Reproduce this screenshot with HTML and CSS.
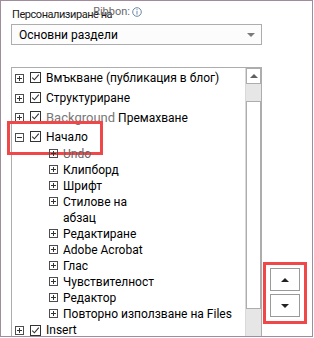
FILE: index.html
```html
<!DOCTYPE html>
<html>
<head>
    <link rel="stylesheet" href="styles.css">
</head>
<body>
    <div class="frame">
        <div class="title">
            <span class="caption">Персонализиране на</span>
            <span class="ribbon">Ribbon:</span>
            <svg class="info" width="10" height="10" viewBox="0 0 10 10">
                <circle cx="5" cy="5" r="4.3" fill="none" stroke="#6d87a8" stroke-width="1"/>
                <rect x="4.5" y="2.2" width="1" height="1" fill="#6d87a8"/>
                <rect x="4.5" y="4" width="1" height="3.6" fill="#6d87a8"/>
            </svg>
        </div>

        <div class="dropdown">
            <span>Основни раздели</span>
            <span class="caret"></span>
        </div>

        <div class="main">
            <div class="listbox">
                <div class="tree">
                    <div class="row top">
                        <span class="exp plus"></span>
                        <svg class="check" width="11" height="11" viewBox="0 0 11 11"><rect x="0.5" y="0.5" width="10" height="10" fill="#fff" stroke="#333"/><path d="M2.2 5.6 L4.4 7.8 L8.8 2.6" fill="none" stroke="#333" stroke-width="1.1"/></svg>
                        <span class="label">Вмъкване (публикация в блог)</span>
                    </div>
                    <div class="row top">
                        <span class="exp plus"></span>
                        <svg class="check" width="11" height="11" viewBox="0 0 11 11"><rect x="0.5" y="0.5" width="10" height="10" fill="#fff" stroke="#333"/><path d="M2.2 5.6 L4.4 7.8 L8.8 2.6" fill="none" stroke="#333" stroke-width="1.1"/></svg>
                        <span class="label">Структуриране</span>
                    </div>
                    <div class="row top">
                        <span class="exp plus"></span>
                        <svg class="check" width="11" height="11" viewBox="0 0 11 11"><rect x="0.5" y="0.5" width="10" height="10" fill="#fff" stroke="#333"/><path d="M2.2 5.6 L4.4 7.8 L8.8 2.6" fill="none" stroke="#333" stroke-width="1.1"/></svg>
                        <span class="label"><span class="muted big">Background</span> Премахване</span>
                    </div>
                    <div class="row top marked">
                        <span class="exp"></span>
                        <svg class="check" width="11" height="11" viewBox="0 0 11 11"><rect x="0.5" y="0.5" width="10" height="10" fill="#fff" stroke="#333"/><path d="M2.2 5.6 L4.4 7.8 L8.8 2.6" fill="none" stroke="#333" stroke-width="1.1"/></svg>
                        <span class="label">Начало</span>
                    </div>

                    <div class="row child"><span class="exp plus"></span><span class="label undo">Undo</span></div>
                    <div class="row child"><span class="exp plus"></span><span class="label">Клипборд</span></div>
                    <div class="row child"><span class="exp plus"></span><span class="label">Шрифт</span></div>
                    <div class="row child"><span class="exp plus"></span><span class="label">Стилове на<br>абзац</span></div>
                    <div class="row child"><span class="exp plus"></span><span class="label">Редактиране</span></div>
                    <div class="row child"><span class="exp plus"></span><span class="label">Adobe Acrobat</span></div>
                    <div class="row child"><span class="exp plus"></span><span class="label">Глас</span></div>
                    <div class="row child"><span class="exp plus"></span><span class="label">Чувствителност</span></div>
                    <div class="row child"><span class="exp plus"></span><span class="label">Редактор</span></div>
                    <div class="row child"><span class="exp plus"></span><span class="label">Повторно използване на Files</span></div>

                    <div class="row last">
                        <span class="exp plus"></span>
                        <svg class="check" width="11" height="11" viewBox="0 0 11 11"><rect x="0.5" y="0.5" width="10" height="10" fill="#fff" stroke="#333"/><path d="M2.2 5.6 L4.4 7.8 L8.8 2.6" fill="none" stroke="#333" stroke-width="1.1"/></svg>
                        <span class="label">Insert</span>
                    </div>
                </div>

                <div class="scrollbar">
                    <div class="sb-btn"><span class="arrow-up small"></span></div>
                    <div class="sb-track top-track"></div>
                    <div class="sb-thumb"></div>
                    <div class="sb-track"></div>
                </div>
            </div>

            <div class="side">
                <div class="move-box">
                    <div class="move-btn"><span class="arrow-up"></span></div>
                    <div class="move-btn"><span class="arrow-down"></span></div>
                </div>
            </div>
        </div>
    </div>
</body>
</html>
```

FILE: styles.css
```css
* {
    margin: 0;
    padding: 0;
    box-sizing: border-box;
}

body {
    background: white;
    font-family: Roboto, 'Liberation Sans', Arial, sans-serif;
    font-size: 12px;
    color: #000;
}

.frame {
    width: 313px;
    height: 337px;
    border: 1px solid #a08c9c;
    padding: 5px 0 0 10px;
    overflow: hidden;
}

.title {
    display: flex;
    align-items: flex-start;
    height: 18px;
    line-height: 18px;
    font-size: 11px;
    color: #1a1a1a;
}

.title .caption {
    letter-spacing: -0.45px;
    padding-left: 1px;
}

.title .ribbon {
    margin-left: -19px;
    margin-top: -3px;
    color: #6a6a6a;
}

.title .info {
    margin-left: 2px;
    margin-top: 1px;
}

.dropdown {
    display: flex;
    align-items: center;
    justify-content: space-between;
    width: 251px;
    height: 21px;
    border: 1px solid #adadad;
    background: #fcfcfc;
    padding: 0 6px 0 7px;
    margin-bottom: 22px;
}

.caret {
    width: 0;
    height: 0;
    border-left: 4px solid transparent;
    border-right: 4px solid transparent;
    border-top: 4px solid #7a7a7a;
}

.main {
    display: flex;
    align-items: flex-start;
}

.listbox {
    display: flex;
    width: 251px;
    height: 290px;
    border: 1px solid #adadad;
}

.tree {
    flex: 1;
    padding-left: 3px;
}

.row {
    display: flex;
    align-items: flex-start;
    position: relative;
}

.row.top {
    height: 19.5px;
    padding-top: 4px;
}

.row.child {
    padding-left: 34px;
    line-height: 16px;
}

.row.child .exp {
    margin-top: 3px;
}

.row .label {
    margin-left: 5px;
    line-height: 13px;
}

.row.child .label,
.row.last .label {
    line-height: 16px;
}

.row.last .exp {
    margin-top: 4px;
}

.row.last .check {
    margin-top: 3px;
}

.muted {
    color: #777;
}

.undo {
    color: #666;
}

.big {
    font-size: 13px;
}

.exp {
    width: 9px;
    height: 9px;
    border: 1px solid #4d4d4d;
    position: relative;
    flex-shrink: 0;
    margin-top: 2px;
    margin-right: 6px;
}

.exp::before {
    content: '';
    position: absolute;
    left: 1px;
    top: 3px;
    width: 5px;
    height: 1px;
    background: #333;
}

.exp.plus::after {
    content: '';
    position: absolute;
    left: 3px;
    top: 1px;
    width: 1px;
    height: 5px;
    background: #333;
}

.row.child .exp {
    margin-right: 0;
}

.check {
    flex-shrink: 0;
}

.marked::after {
    content: '';
    position: absolute;
    left: -8px;
    top: -6px;
    width: 90px;
    height: 28px;
    border: 3px solid #f04848;
}

.scrollbar {
    width: 16px;
    display: flex;
    flex-direction: column;
    border-left: 1px solid #d9d9d9;
}

.sb-btn {
    height: 16px;
    border: 1px solid #adadad;
    display: flex;
    align-items: center;
    justify-content: center;
    background: #fff;
}

.sb-track {
    flex: 1;
    background: #e6e6e6;
}

.sb-track.top-track {
    flex: none;
    height: 17px;
}

.sb-thumb {
    height: 208px;
    border: 1px solid #adadad;
    background: #fff;
}

.side {
    padding: 195px 0 0 1px;
}

.move-box {
    width: 44px;
    height: 62px;
    border: 3px solid #f04848;
    padding: 3px 0 0 4px;
    display: flex;
    flex-direction: column;
    gap: 3px;
}

.move-btn {
    width: 30px;
    height: 23px;
    border: 1px solid #9a9a9a;
    display: flex;
    align-items: center;
    justify-content: center;
}

.arrow-up {
    width: 0;
    height: 0;
    border-left: 4px solid transparent;
    border-right: 4px solid transparent;
    border-bottom: 4px solid #222;
}

.arrow-up.small {
    border-bottom-color: #606060;
}

.arrow-down {
    width: 0;
    height: 0;
    border-left: 4px solid transparent;
    border-right: 4px solid transparent;
    border-top: 4px solid #222;
}
```
